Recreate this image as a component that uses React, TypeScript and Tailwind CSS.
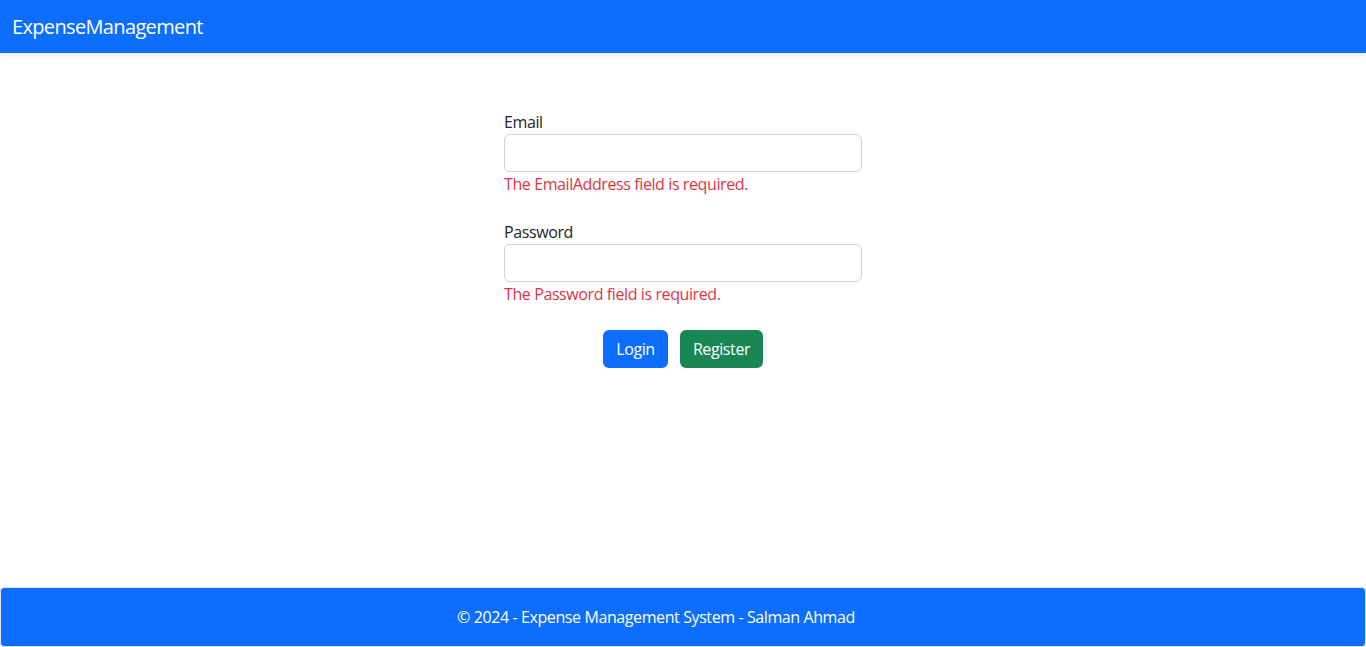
export default function App() {
  return (
    <div className="flex min-h-screen flex-col bg-white font-['Open_Sans',sans-serif] tracking-[-0.4px] text-[#212529]">
      {/* Navbar */}
      <header className="flex h-[53px] shrink-0 items-center bg-[#0d6efd] px-3 shadow-[0_2px_6px_rgba(0,0,0,0.1)]">
        <span className="text-[20px] tracking-[-0.65px] text-white">ExpenseManagement</span>
      </header>

      {/* Login form */}
      <main className="flex flex-1 justify-center pt-[57px]">
        <form className="flex w-[358px] flex-col">
          <div className="mb-6 flex flex-col">
            <label className="text-[16px] leading-6">Email</label>
            <input className="h-[38px] rounded-[6px] border border-[#ced4da] bg-white px-3" />
            <span className="text-[16px] leading-6 text-[#dc3545]">The EmailAddress field is required.</span>
          </div>
          <div className="mb-6 flex flex-col">
            <label className="text-[16px] leading-6">Password</label>
            <input type="password" className="h-[38px] rounded-[6px] border border-[#ced4da] bg-white px-3" />
            <span className="text-[16px] leading-6 text-[#dc3545]">The Password field is required.</span>
          </div>
          <div className="flex justify-center gap-3">
            <button type="button" className="h-[38px] w-[65px] rounded-[6px] bg-[#0d6efd] text-[16px] text-white">
              Login
            </button>
            <button type="button" className="h-[38px] w-[83px] rounded-[6px] bg-[#198754] text-[16px] text-white">
              Register
            </button>
          </div>
        </form>
      </main>

      {/* Footer */}
      <footer className="flex h-[60px] shrink-0 items-center justify-center rounded-[4px] border border-[#dee2e6] bg-[#0d6efd] pr-[54px] text-[16px] text-white">
        © 2024 - Expense Management System - Salman Ahmad
      </footer>
    </div>
  );
}
